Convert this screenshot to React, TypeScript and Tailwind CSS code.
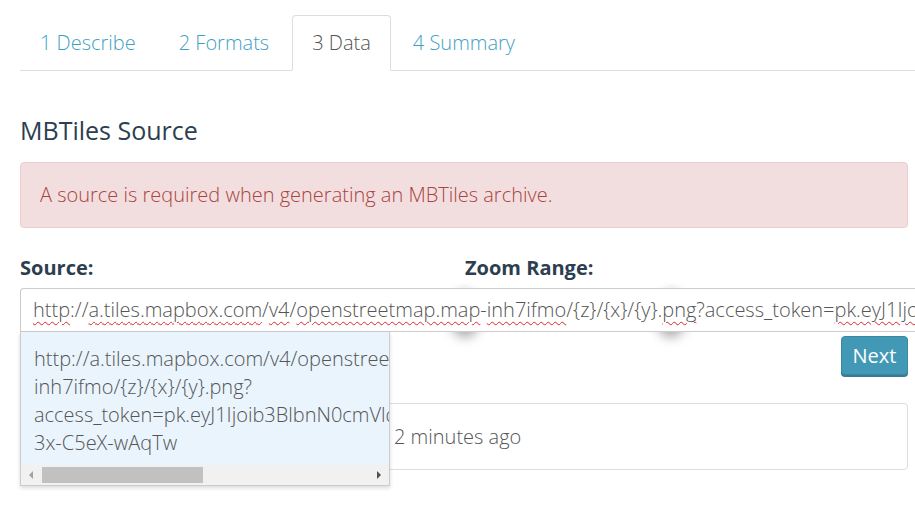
import React from "react";

const tabs = ["1 Describe", "2 Formats", "3 Data", "4 Summary"];

// words flagged by the spellchecker get a red wavy underline
const Typo = ({ children }: { children: React.ReactNode }) => (
  <span className="underline decoration-wavy decoration-[#e0242b] decoration-1 underline-offset-[4px]">
    {children}
  </span>
);

export default function App() {
  return (
    <div className="min-h-screen overflow-hidden bg-white font-['Open_Sans',sans-serif] font-light text-[20px] text-[#555]">
      <div className="ml-5 w-[888px] pt-[15px]">
        {/* wizard tabs */}
        <div className="flex h-[56px] w-[895px] border-b border-[#ddd]">
          {tabs.map((t, i) => (
            <div
              key={t}
              className={
                i === 2
                  ? "-mb-px mr-[2px] flex h-[56px] items-center rounded-t-[4px] border border-[#ddd] border-b-white bg-white px-[19px] text-[#555]"
                  : "-mb-px mr-[3px] flex h-[56px] items-center border border-transparent px-[19px] text-[#3f9fc2]"
              }
            >
              {t}
            </div>
          ))}
        </div>

        <h2 className="mt-[45px] text-[25px] font-normal leading-[28px] text-[#2c3e50]">
          MBTiles Source
        </h2>

        <div className="mt-[18px] flex h-[66px] items-center rounded-[4px] border border-[#ebccd1] bg-[#f2dede] px-[19px] text-[#a94442]">
          A source is required when generating an MBTiles archive.
        </div>

        <div className="mt-[28px] grid grid-cols-[445px_1fr]">
          <div>
            <div className="font-bold leading-[24px] text-[#2c3e50]">Source:</div>
            <div className="relative z-10 mt-2 w-[895px]">
              <div className="flex h-[44px] items-center overflow-hidden whitespace-nowrap rounded-tl-[4px] border border-r-0 border-[#ccc] bg-white pl-3">
                <Typo>http</Typo>://<Typo>a.tiles.mapbox.com</Typo>/<Typo>v4</Typo>/
                <Typo>openstreetmap.map</Typo>-<Typo>inh7ifmo</Typo>/{"{z}"}/{"{x}"}/{"{y}"}.
                <Typo>png</Typo>?access_token=<Typo>pk.eyJ1Ijoib3BlbnN0cmVldG1hcCIsImEiOiJncjlmd0t3In0</Typo>
              </div>

              {/* autocomplete suggestion */}
              <div className="absolute left-0 top-[44px] w-[370px] overflow-hidden border border-t-0 border-[#ccc] bg-white shadow-[0_2px_4px_rgba(0,0,0,0.15)]">
                <div className="h-[133px] overflow-hidden whitespace-nowrap bg-[#e9f4fd] pl-[13px] pt-[13px] leading-[28px]">
                  <div>http://a.tiles.mapbox.com/v4/openstreetmap.map-</div>
                  <div>inh7ifmo/{"{z}"}/{"{x}"}/{"{y}"}.png?</div>
                  <div>access_token=pk.eyJ1Ijoib3BlbnN0cmVldG1hcCIsImEiOiJncjlmd0t3In0.DmZsIeOW_</div>
                  <div>3x-C5eX-wAqTw</div>
                </div>
                <div className="flex h-[20px] items-center bg-[#f1f1f1] px-[5px]">
                  <svg width="11" height="12" viewBox="0 0 11 12">
                    <path d="M7 2 L3 6 L7 10 Z" fill="#a3a3a3" />
                  </svg>
                  <div className="ml-[5px] h-[16px] w-[161px] bg-[#c1c1c1]" />
                  <div className="flex-1" />
                  <svg width="11" height="12" viewBox="0 0 11 12">
                    <path d="M4 2 L8 6 L4 10 Z" fill="#505050" />
                  </svg>
                </div>
              </div>
            </div>
          </div>

          <div>
            <div className="font-bold leading-[24px] text-[#2c3e50]">Zoom Range:</div>
            <div className="relative mt-[5px] h-[48px]">
              <div className="absolute left-[-13px] top-0 h-[44px] w-[26px] rounded-full bg-[#f4f4f4] shadow-[0_8px_12px_rgba(0,0,0,0.35)]" />
              <div className="absolute left-[193px] top-0 h-[44px] w-[26px] rounded-full bg-[#f4f4f4] shadow-[0_8px_12px_rgba(0,0,0,0.35)]" />
            </div>
          </div>
        </div>

        <div className="mt-[3px] flex justify-end">
          <button className="h-[39px] w-[67px] rounded-[4px] border border-[#3a87a1] bg-[#4299b5] font-normal text-white shadow-[0_2px_0_#337c93]">
            Next
          </button>
        </div>

        <div className="mt-[28px] grid h-[67px] grid-cols-[373px_1fr] items-center rounded-[4px] border border-[#ddd]">
          <div />
          <div>2 minutes ago</div>
        </div>
      </div>
    </div>
  );
}
